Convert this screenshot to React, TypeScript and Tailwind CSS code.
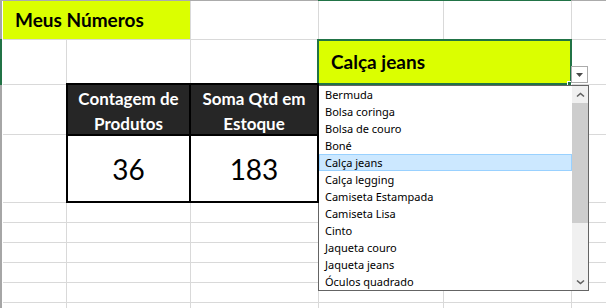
import React from "react";

const items = [
  "Bermuda",
  "Bolsa coringa",
  "Bolsa de couro",
  "Boné",
  "Calça jeans",
  "Calça legging",
  "Camiseta Estampada",
  "Camiseta Lisa",
  "Cinto",
  "Jaqueta couro",
  "Jaqueta jeans",
  "Óculos quadrado",
];

function Cell() {
  return <div className="bg-white" />;
}

function Chevron({ down }: { down?: boolean }) {
  return (
    <svg width="9" height="6" viewBox="0 0 9 6">
      <polyline
        points={down ? "1,1.5 4.5,4.5 8,1.5" : "1,4.5 4.5,1.5 8,4.5"}
        fill="none"
        stroke="#606060"
        strokeWidth="1.6"
      />
    </svg>
  );
}

export default function App() {
  const lowerRows = [0, 1, 2, 3, 4, 5];
  return (
    <div className="relative h-[308px] w-[606px] overflow-hidden bg-white font-['Lato',sans-serif]">
      <div className="flex h-px">
        <div className="w-[318px] bg-[#ababab]" />
        <div className="w-[253px] bg-[#217346]" />
        <div className="flex-1 bg-[#ababab]" />
      </div>
      <div className="flex h-[307px]">
        <div className="flex w-[2px] flex-col">
          <div className="h-[38px] bg-[#a6a6a6]" />
          <div className="h-[46px] bg-[#217346]" />
          <div className="flex-1 bg-[#a6a6a6]" />
        </div>
        <div className="w-px bg-white" />
        <div className="grid flex-1 grid-cols-[63px_123px_127px_124px_127px_1fr] grid-rows-[38px_44px_49px_67px_19px_19px_19px_19px_19px_19px] gap-px bg-[#d9d9d9]">
          {/* row 1 */}
          <div className="col-span-2 flex items-center bg-[#dbff00] pl-3 text-[19px] font-bold text-black">
            Meus Números
          </div>
          <Cell />
          <Cell />
          <Cell />
          <Cell />
          {/* row 2 */}
          <Cell />
          <Cell />
          <Cell />
          <div className="relative col-span-2 flex items-center bg-[#dbff00] pl-3 text-[19px] font-bold text-black">
            Calça jeans
            <div className="absolute -bottom-px -left-[2px] -right-px -top-px border-2 border-[#217346]" />
          </div>
          <Cell />
          {/* row 3 */}
          <Cell />
          <div className="relative z-10 col-span-2 row-span-2 -mx-px -mb-px -mt-[2px] grid grid-cols-[121px_1fr] grid-rows-[49px_1fr] gap-[2px] border-2 border-black bg-black">
            <div className="bg-[#262626] pt-px text-center text-[17px] font-bold leading-[25px] text-white">
              Contagem de
              <br />
              Produtos
            </div>
            <div className="bg-[#262626] pt-px text-center text-[17px] font-bold leading-[25px] text-white">
              Soma Qtd em
              <br />
              Estoque
            </div>
            <div className="flex items-center justify-center bg-white text-[28px] text-black">
              36
            </div>
            <div className="flex items-center justify-center bg-white text-[28px] text-black">
              183
            </div>
          </div>
          <Cell />
          <Cell />
          <Cell />
          {/* row 4 */}
          <Cell />
          <Cell />
          <Cell />
          <Cell />
          {lowerRows.map((r) => (
            <React.Fragment key={r}>
              <Cell />
              <Cell />
              <Cell />
              <Cell />
              <Cell />
              <Cell />
            </React.Fragment>
          ))}
        </div>
      </div>

      {/* fill handle */}
      <div className="absolute left-[567px] top-[81px] h-[5px] w-[5px] border border-white bg-[#217346]" />

      {/* dropdown button */}
      <div className="absolute left-[571px] top-[66px] flex h-[17px] w-[17px] items-center justify-center border border-[#ababab] bg-white">
        <svg width="7" height="4" viewBox="0 0 7 4">
          <polygon points="0,0 7,0 3.5,4" fill="#4a4a4a" />
        </svg>
      </div>

      {/* dropdown list */}
      <div className="absolute left-[318px] top-[85px] flex h-[206px] w-[271px] border border-[#646464] bg-white font-['Noto_Sans',sans-serif]">
        <div className="flex flex-1 flex-col">
          {items.map((it) => (
            <div
              key={it}
              className={
                it === "Calça jeans"
                  ? "h-[17px] whitespace-nowrap bg-[#cce8ff] pl-[6px] pt-px text-[11px] leading-[16px] text-black shadow-[inset_0_0_0_1px_#99d1ff]"
                  : "h-[17px] whitespace-nowrap pl-[6px] pt-px text-[11px] leading-[16px] text-black"
              }
            >
              {it}
            </div>
          ))}
        </div>
        <div className="flex w-[16px] flex-col bg-[#f0f0f0]">
          <div className="flex h-[17px] items-center justify-center">
            <Chevron />
          </div>
          <div className="h-[120px] bg-[#cdcdcd]" />
          <div className="flex-1" />
          <div className="flex h-[17px] items-center justify-center">
            <Chevron down />
          </div>
        </div>
      </div>
    </div>
  );
}
